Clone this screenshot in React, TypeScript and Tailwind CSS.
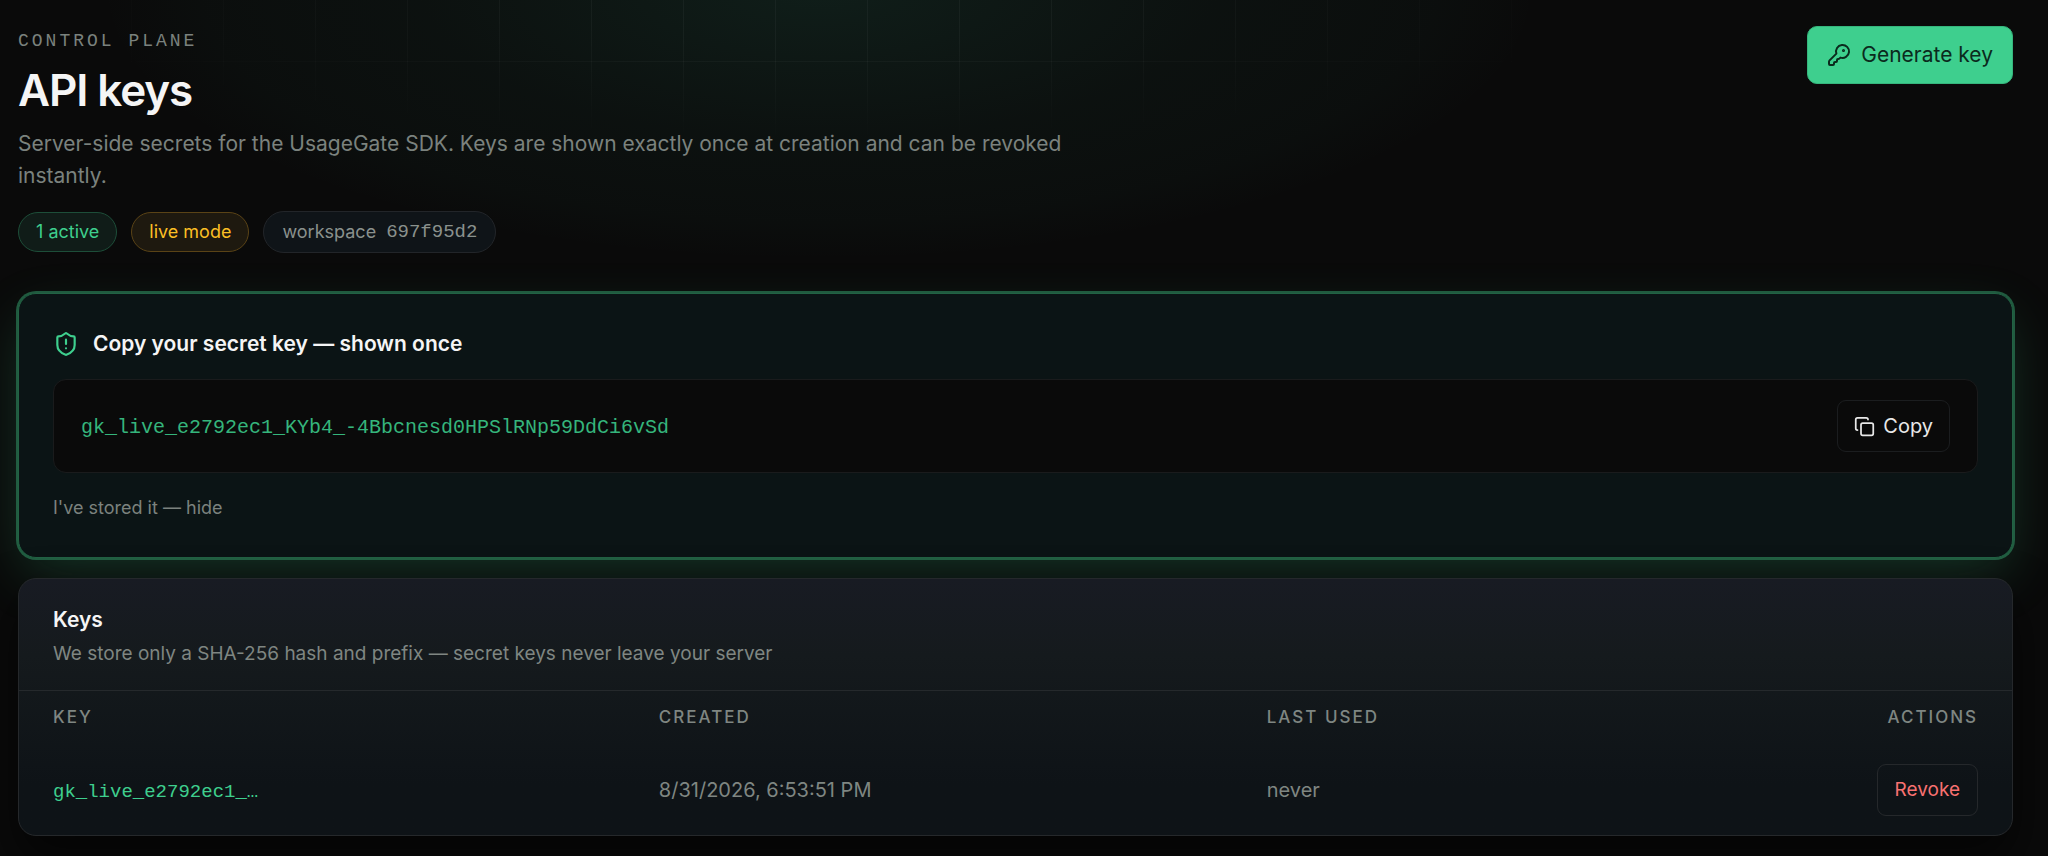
import { Copy, KeyRound, ShieldAlert } from "lucide-react";

const secretKey = "gk_live_e2792ec1_KYb4_-4Bbcnesd0HPSlRNp59DdCi6vSd";

const keys = [
  { prefix: "gk_live_e2792ec1_…", created: "8/31/2026, 6:53:51 PM", lastUsed: "never" },
];

const mono = "font-['Liberation_Mono',monospace]";

function Backdrop() {
  return (
    <div aria-hidden="true" className="pointer-events-none absolute inset-0 -z-10">
      <div className="absolute inset-0 bg-[radial-gradient(ellipse_720px_270px_at_40%_-10px,rgba(62,190,150,0.11),rgba(62,190,150,0.04)_55%,rgba(62,190,150,0.025)_85%,transparent)]" />
      <div className="absolute inset-0 bg-[linear-gradient(to_right,rgba(255,255,255,0.04)_1px,transparent_1px),linear-gradient(to_bottom,rgba(255,255,255,0.04)_1px,transparent_1px)] bg-size-[92px_92px] bg-position-[39px_-31px] mask-[radial-gradient(ellipse_860px_150px_at_40%_0,black_30%,transparent)]" />
    </div>
  );
}

function PageHeader() {
  return (
    <header className="flex items-start justify-between gap-8">
      <div className="max-w-[1100px]">
        <p className={`${mono} text-[18px] leading-[30px] tracking-[3px] text-[#7b827e]`}>CONTROL PLANE</p>
        <h1 className="mt-2 text-[44px] leading-[52px] font-semibold tracking-tight text-[#f5f5f5]">API keys</h1>
        <p className="mt-3 text-[21px] leading-8 text-[#7b827e]">
          Server-side secrets for the UsageGate SDK. Keys are shown exactly once at creation and can be revoked
          instantly.
        </p>
        <div className="mt-[19px] flex flex-wrap items-center gap-[14px] text-[18px] leading-6">
          <span className="rounded-full border border-[#1d4e39] bg-[#101c18] px-[17px] py-[7px] text-[#3ecf8e]">1 active</span>
          <span className="rounded-full border border-[#5a4316] bg-[#1e190f] px-[17px] py-[7px] text-[#fbbf24]">live mode</span>
          <span className="flex items-center gap-[10px] rounded-full border border-[#222529] bg-[#0f1418] px-[18px] py-2 text-[#8a918d]">
            workspace <span className={`${mono} text-[19px]`}>697f95d2</span>
          </span>
        </div>
      </div>
      <button
        type="button"
        className="flex h-[58px] shrink-0 items-center gap-[10px] rounded-[10px] border border-[#36b67d] bg-[#3ecf8e] px-[19px] text-[21px] text-[#0b2a1d]"
      >
        <KeyRound size={24} strokeWidth={2} />
        Generate key
      </button>
    </header>
  );
}

function SecretPanel() {
  return (
    <section className="mt-10 rounded-[18px] border border-[#226244] bg-[#0b1415] px-[34px] py-[35px] shadow-[0_0_0_2px_rgba(40,116,80,0.75),0_20px_56px_-6px_rgba(62,207,142,0.22)]">
      <h2 className="flex items-center gap-[14px] text-[21px] leading-[30px] font-semibold text-[#f5f5f5]">
        <ShieldAlert size={26} strokeWidth={2} className="text-[#3ecf8e]" />
        Copy your secret key — shown once
      </h2>
      <div className="mt-5 flex items-center justify-between gap-6 rounded-[13px] border border-[#1a1b1c] bg-[#0a0a0a] px-[27px] py-5">
        <code className={`${mono} pt-1 text-[20px] break-all text-[#35b57c]`}>{secretKey}</code>
        <button
          type="button"
          className="flex h-[52px] shrink-0 items-center gap-2 rounded-[9px] border border-[#1b1d1f] px-4 text-[20px] text-[#e8e8e8]"
        >
          <Copy size={21} strokeWidth={2} />
          Copy
        </button>
      </div>
      <button type="button" className="mt-[21px] block text-[18px] leading-7 text-[#7b827e]">
        I've stored it — hide
      </button>
    </section>
  );
}

function KeysPanel() {
  return (
    <section className="mt-5 overflow-hidden rounded-[18px] border border-[#25282b] bg-linear-to-b from-[#181b23] via-[#151a1d] via-30% to-[#0e1317] to-80% shadow-[0_24px_48px_rgba(0,0,0,0.6)]">
      <div className="border-b border-[#25292c] px-[34px] pt-[27px] pb-[22px]">
        <h2 className="text-[21px] leading-7 font-semibold text-[#f5f5f5]">Keys</h2>
        <p className="mt-[6px] text-[19px] leading-7 text-[#7f8682]">
          We store only a SHA-256 hash and prefix — secret keys never leave your server
        </p>
      </div>
      <table className="w-full table-fixed text-left">
        <thead>
          <tr className="h-[54px] text-[17px] tracking-[2px] text-[#7f8682]">
            <th className="w-[30.4%] px-[34px] font-medium">KEY</th>
            <th className="w-[30.5%] px-[34px] font-medium">CREATED</th>
            <th className="px-[34px] font-medium">LAST USED</th>
            <th className="px-[34px] text-right font-medium">ACTIONS</th>
          </tr>
        </thead>
        <tbody>
          {keys.map((key) => (
            <tr key={key.prefix} className="text-[20px] text-[#7f8682]">
              <td className="px-[34px] py-[19px]">
                <code className={`${mono} block pt-1 text-[19px] text-[#3ecf8e]`}>{key.prefix}</code>
              </td>
              <td className="px-[34px] py-[19px]">{key.created}</td>
              <td className="px-[34px] py-[19px]">{key.lastUsed}</td>
              <td className="px-[34px] py-[19px]">
                <button
                  type="button"
                  className="ml-auto block h-[52px] rounded-[9px] border border-[#25282b] px-[17px] text-[19px] text-[#f87171]"
                >
                  Revoke
                </button>
              </td>
            </tr>
          ))}
        </tbody>
      </table>
    </section>
  );
}

export default function App() {
  return (
    <main className="relative isolate min-h-screen overflow-hidden bg-[#0a0a0a] pt-[26px] pr-[35px] pb-4 pl-[18px] font-['Inter',sans-serif]">
      <Backdrop />
      <PageHeader />
      <SecretPanel />
      <KeysPanel />
    </main>
  );
}
